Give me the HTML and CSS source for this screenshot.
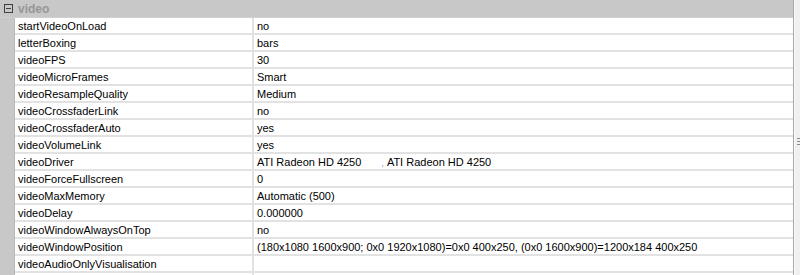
FILE: index.html
```html
<!DOCTYPE html>
<html lang="en">
<head>
  <meta charset="UTF-8">
  <title>Properties - video</title>
  <link rel="stylesheet" href="styles.css">
</head>
<body>
  <div class="panel">
    <div class="grid">
      <!-- category header -->
      <div class="category">
        <span class="toggle"><span class="toggle-bar"></span></span>
        <span class="cat-name">video</span>
      </div>

      <div class="rows">
        <div class="row"><div class="key">startVideoOnLoad</div><div class="val">no</div></div>
        <div class="row"><div class="key">letterBoxing</div><div class="val">bars</div></div>
        <div class="row"><div class="key">videoFPS</div><div class="val">30</div></div>
        <div class="row"><div class="key">videoMicroFrames</div><div class="val">Smart</div></div>
        <div class="row"><div class="key">videoResampleQuality</div><div class="val">Medium</div></div>
        <div class="row"><div class="key">videoCrossfaderLink</div><div class="val">no</div></div>
        <div class="row"><div class="key">videoCrossfaderAuto</div><div class="val">yes</div></div>
        <div class="row"><div class="key">videoVolumeLink</div><div class="val">yes</div></div>
        <div class="row"><div class="key">videoDriver</div><div class="val">ATI Radeon HD 4250<span class="sep">,</span>ATI Radeon HD 4250</div></div>
        <div class="row"><div class="key">videoForceFullscreen</div><div class="val">0</div></div>
        <div class="row"><div class="key">videoMaxMemory</div><div class="val">Automatic (500)</div></div>
        <div class="row"><div class="key">videoDelay</div><div class="val">0.000000</div></div>
        <div class="row"><div class="key">videoWindowAlwaysOnTop</div><div class="val">no</div></div>
        <div class="row"><div class="key">videoWindowPosition</div><div class="val">(180x1080 1600x900; 0x0 1920x1080)=0x0 400x250, (0x0 1600x900)=1200x184 400x250</div></div>
        <div class="row"><div class="key">videoAudioOnlyVisualisation</div><div class="val"></div></div>
        <div class="row"><div class="key"></div><div class="val"></div></div>
      </div>
    </div>

    <!-- splitter strip on the right -->
    <div class="splitter">
      <span class="grip"></span>
    </div>
  </div>
</body>
</html>
```

FILE: styles.css
```css
/* base */
body {
  margin: 0;
  font-family: "Liberation Sans", Arial, sans-serif;
  font-size: 11px;
  color: #000;
  background-color: #fff;
}

.panel {
  display: flex;
  height: 275px;
  overflow: hidden;
}

.grid {
  width: 793px;
  background-color: #c8c8c8;
  border-right: 1px solid #a8a8a8;
}

/* category header */
.category {
  display: flex;
  align-items: center;
  height: 17px;
  border-bottom: 1px solid #d0d0d0;
}

.toggle {
  box-sizing: border-box;
  width: 9px;
  height: 9px;
  margin-left: 4px;
  border: 1px solid #404040;
  display: flex;
  align-items: center;
  justify-content: center;
}

.toggle-bar {
  width: 5px;
  height: 1px;
  background-color: #404040;
}

.cat-name {
  margin-left: 5px;
  font-weight: bold;
  font-size: 12px;
  color: #969696;
}

/* property rows */
.rows {
  margin-left: 14px;
  border-left: 1px solid #b8b8b8;
}

.row {
  display: grid;
  grid-template-columns: 239px 1fr;
  height: 15px;
  border-bottom: 2px solid #e2e2e2;
  background-color: #fff;
}

.key,
.val {
  line-height: 17px;
  height: 15px;
  white-space: nowrap;
  overflow: hidden;
}

.key {
  padding-left: 3px;
  border-right: 2px solid #e2e2e2;
}

.val {
  padding-left: 3px;
}

.sep {
  color: #6fa6d8;
  font-size: 9px;
  margin-left: 20px;
  margin-right: 3px;
}

/* right strip */
.splitter {
  flex: 1;
  background-color: #f0f0f0;
  border-left: 1px solid #fafafa;
  position: relative;
}

.grip {
  position: absolute;
  left: 2px;
  top: 138px;
  width: 4px;
  height: 7px;
  background: repeating-linear-gradient(#8a8a8a 0 1px, transparent 1px 3px);
}
```
